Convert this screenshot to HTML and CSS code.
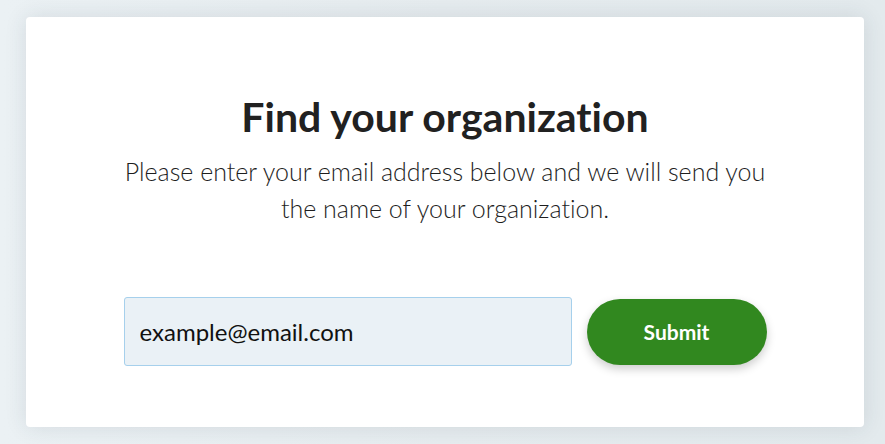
FILE: index.html
```html
<!DOCTYPE html>
<html lang="en">
<head>
<meta charset="utf-8">
<title>Find your organization</title>
<link rel="stylesheet" href="styles.css">
</head>
<body>
<main class="page">
  <section class="card">
    <h1 class="title">Find your organization</h1>
    <p class="lead">Please enter your email address below and we will send you the name of your organization.</p>
    <form class="form">
      <input class="email" type="email" value="example@email.com" aria-label="Email">
      <button class="submit" type="button">Submit</button>
    </form>
  </section>
</main>
</body>
</html>
```
FILE: styles.css
```css
html, body {
  margin: 0;
  padding: 0;
}
body {
  background: linear-gradient(90deg, #ebf1f4 0%, #e6ecef 50%, #e3eaed 100%);
  font-family: Lato, "Open Sans", sans-serif;
  font-variant-ligatures: none;
  height: 444px;
  overflow: hidden;
}
.page {
  padding: 17px 21px 17px 26px;
}
.card {
  background: #ffffff;
  border-radius: 4px;
  box-shadow: 0 0 22px rgba(40, 60, 70, 0.12);
  height: 410px;
  box-sizing: border-box;
  padding-top: 75px;
  display: flex;
  flex-direction: column;
  align-items: center;
}
.title {
  margin: 0;
  font-size: 41px;
  line-height: 49px;
  font-weight: 700;
  color: #212121;
}
.lead {
  margin: 12px 0 0;
  width: 660px;
  text-align: center;
  font-size: 25px;
  line-height: 37px;
  font-weight: 300;
  color: #1e1e1e;
}
.form {
  margin-top: 70px;
  display: flex;
  align-items: center;
  gap: 15px;
}
.email {
  width: 448px;
  height: 69px;
  box-sizing: border-box;
  padding: 0 15px;
  background: #eaf1f6;
  border: 1px solid #a6d0ec;
  border-radius: 3px;
  font-family: Lato, sans-serif;
  font-variant-ligatures: none;
  font-size: 24px;
  color: #111;
  outline: none;
}
.submit {
  width: 180px;
  height: 66px;
  border: none;
  border-radius: 33px;
  background: #31881f;
  color: #ffffff;
  font-family: Lato, sans-serif;
  font-size: 21px;
  font-weight: 700;
  box-shadow: 0 4px 10px rgba(0, 0, 0, 0.2);
  cursor: pointer;
}
```
